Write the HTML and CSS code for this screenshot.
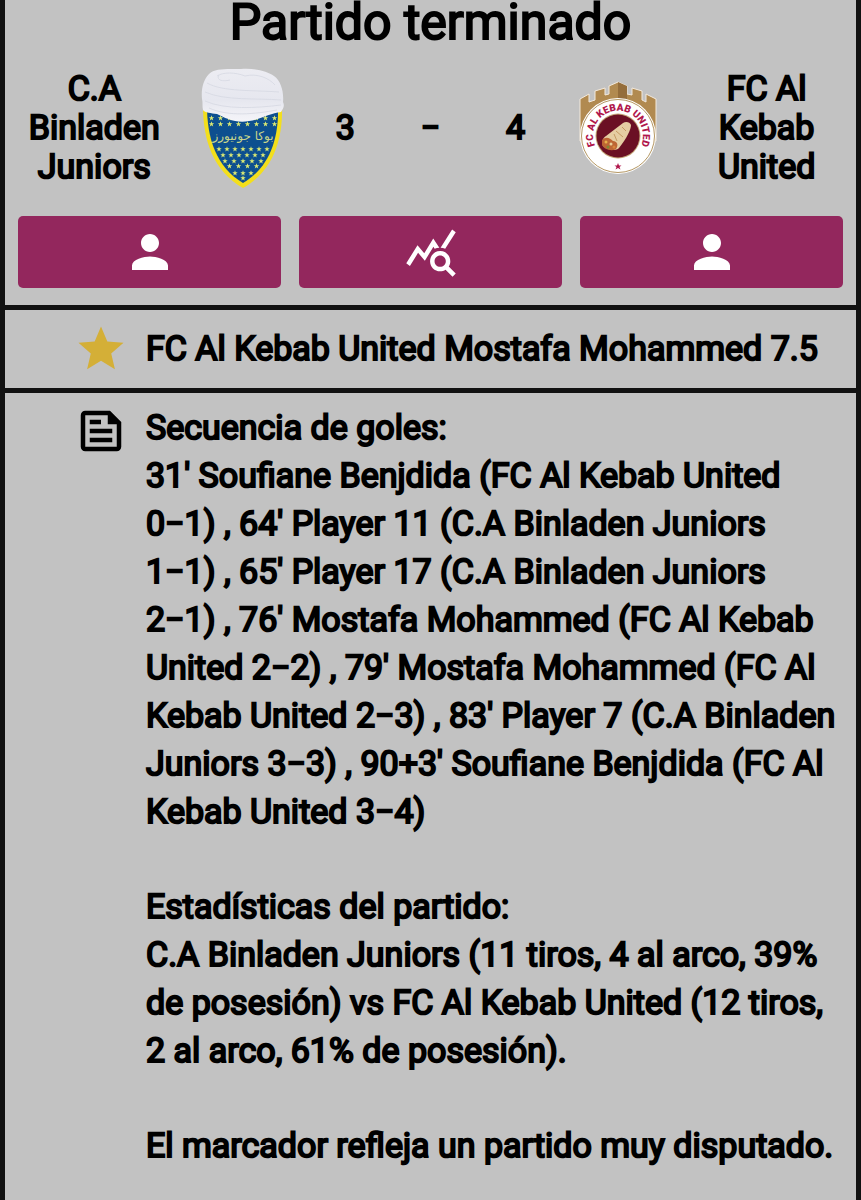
FILE: index.html
```
<!DOCTYPE html>
<html lang="es">
<head>
  <meta charset="UTF-8" />
  <meta name="viewport" content="width=device-width, initial-scale=1.0"/>
  <title>Partido terminado</title>
  <link rel="stylesheet" href="styles.css">
</head>
<body>
  <main class="card">
    <section class="match">
      <h1>Partido terminado</h1>

      <div class="scoreboard">
        <h2 class="team">C.A Binladen Juniors</h2>
        <svg class="crest" width="84" height="120" viewBox="0 0 84 120" role="img" aria-label="Escudo C.A Binladen Juniors">
          <defs>
            <path id="star" d="M0-2.7L.7-.8 2.700-.8 1.100.5 1.700 2.400 0 1.200 -1.700 2.400 -1.100.5 -2.700-.8 -.7-.8Z" fill="#dcea74"/>
            <linearGradient id="cloth" x1="0" y1="0" x2="0" y2="1">
              <stop offset="0" stop-color="#ececf2"/>
              <stop offset=".6" stop-color="#e6e7ef"/>
              <stop offset="1" stop-color="#f5f5f9"/>
            </linearGradient>
          </defs>
          <path d="M2 38H81C82 72 72 103 42 120C12 103 2 72 2 38Z" fill="#f3df1c"/>
          <path d="M6 38H77C78 70 69 99 42 115C15 99 6 70 6 38Z" fill="#0d4f8f"/>
          <g id="stars"></g>
          <text class="crest-text" x="42" y="72" text-anchor="middle">بوكا جونيورز</text>
          <path d="M1 31C0 22 2 12 8 6C14 0 26 1 40 1C54 0 66 3 73 8C80 13 83 24 82 34C84 38 82 41 80 44C70 45 60 51 48 53C36 56 24 50 16 46C10 45 4 45 2 42C1 38 2 35 1 31Z" fill="url(#cloth)"/>
          <g fill="none" stroke="#d6d8e2" stroke-width=".8">
            <path d="M16 8C22 4 34 4 44 8C56 5 68 10 74 17"/>
            <path d="M18 7C15 12 21 14 29 12"/>
            <path d="M6 15C22 24 52 22 78 24"/>
            <path d="M4 24C24 33 56 30 80 32"/>
            <path d="M4 33C24 42 56 40 80 37"/>
            <path d="M8 40C28 49 54 46 76 42"/>
          </g>
        </svg>
        <span class="score">3</span>
        <span class="score">−</span>
        <span class="score">4</span>
        <svg class="crest" width="78" height="94" viewBox="0 0 78 94" role="img" aria-label="Escudo FC Al Kebab United">
          <path d="M1 60V18L10 13V21L16 19V10L26 7V14L30 13V5L39 1L48 5V13L53 14V7L63 10V19L67 21V13L77 18V60Z" fill="#b18a50" stroke="#f4eadc" stroke-width="1"/>
          <path d="M39 1V20H48V5Z" fill="#946d3b"/>
          <circle cx="39" cy="55" r="38" fill="#fff"/>
          <circle cx="39" cy="55" r="36.500" fill="none" stroke="#b59864" stroke-width="1"/>
          <circle cx="39" cy="55" r="22.500" fill="#c5a779"/>
          <circle cx="39" cy="55" r="21.500" fill="#6b1024"/>
          <path id="arc" d="M20 71A25 25 0 1 1 58 71" fill="none"/>
          <text class="ring-text"><textPath href="#arc" startOffset="50%" text-anchor="middle">FC AL KEBAB UNITED</textPath></text>
          <path d="M44 42C47 40 51 41 52 44C52 48 48 57 40 67C36 71 27 68 24 65C22 61 24 57 27 55Z" fill="#e5cda2"/>
          <path d="M43 46L47 50M37 50L44 56M35 53L38 60" stroke="#c49a63" stroke-width="1" fill="none"/>
          <path d="M23 59C27 55 31 57 34 60C38 60 40 64 37 68C32 71 25 68 23 64Z" fill="#bd6534"/>
          <g>
            <circle cx="27" cy="61" r="1.500" fill="#e8b04a"/>
            <circle cx="32" cy="63" r="1.500" fill="#e9cf9a"/>
            <circle cx="29" cy="66" r="1.500" fill="#7d8a35"/>
            <circle cx="35" cy="66" r="1.500" fill="#d8843c"/>
          </g>
          <path d="M39 82L40 84.500 42.500 84.500 40.500 86 41.500 88.500 39 87 36.500 88.500 37.500 86 35.500 84.500 38 84.500Z" fill="#b0164b"/>
        </svg>
        <h2 class="team">FC Al Kebab United</h2>
      </div>

      <div class="actions">
        <button type="button" aria-label="Jugadores C.A Binladen Juniors">
          <svg class="icon" viewBox="0 0 24 24"><path d="M12 12c2.210 0 4-1.790 4-4s-1.790-4-4-4-4 1.790-4 4 1.790 4 4 4zm0 2c-2.670 0-8 1.340-8 4v2h16v-2c0-2.660-5.330-4-8-4z"/></svg>
        </button>
        <button type="button" aria-label="Estadísticas">
          <svg class="icon" viewBox="0 0 24 24"><path d="M19.880 18.470c.44-.7.7-1.510.7-2.390 0-2.490-2.010-4.500-4.500-4.500s-4.500 2.010-4.500 4.500 2.010 4.500 4.490 4.500c.88 0 1.700-.26 2.390-.7L21.580 23 23 21.580l-3.120-3.110zm-3.800.11c-1.380 0-2.500-1.120-2.500-2.500s1.120-2.500 2.500-2.500 2.500 1.120 2.500 2.500-1.120 2.500-2.500 2.500zm-.36-8.500c-.74.02-1.450.18-2.100.45l-.55-.83-3.800 6.180-3.010-3.520-3.630 5.810L1 17l5-8 3 3.500L13 6l2.720 4.080zm2.590.5c-.64-.28-1.330-.45-2.050-.49L21.380 2 23 3.180l-4.690 7.400z"/></svg>
        </button>
        <button type="button" aria-label="Jugadores FC Al Kebab United">
          <svg class="icon" viewBox="0 0 24 24"><path d="M12 12c2.210 0 4-1.790 4-4s-1.790-4-4-4-4 1.790-4 4 1.790 4 4 4zm0 2c-2.670 0-8 1.340-8 4v2h16v-2c0-2.660-5.330-4-8-4z"/></svg>
        </button>
      </div>
    </section>

    <section class="row best">
      <svg class="icon star" viewBox="0 0 24 24"><path d="M12 17.270L18.180 21l-1.640-7.030L22 9.240l-7.190-.61L12 2 9.190 8.630 2 9.240l5.460 4.730L5.820 21z"/></svg>
      <p>FC Al Kebab United Mostafa Mohammed 7.5</p>
    </section>

    <section class="row report">
      <svg class="icon" viewBox="0 0 24 24"><path d="M16 3H5c-1.100 0-2 .9-2 2v14c0 1.100.9 2 2 2h14c1.100 0 2-.9 2-2V8l-5-5zm3 16H5V5h10v4h4v10zM7 17h10v-2H7v2zm5-10H7v2h5V7zm-5 6h10v-2H7v2z"/></svg>
      <div class="report-text">
        <h3>Secuencia de goles:</h3>
        <p>31' Soufiane Benjdida (FC Al Kebab United 0−1) , 64' Player 11 (C.A Binladen Juniors 1−1) , 65' Player 17 (C.A Binladen Juniors 2−1) , 76' Mostafa Mohammed (FC Al Kebab United 2−2) , 79' Mostafa Mohammed (FC Al Kebab United 2−3) , 83' Player 7 (C.A Binladen Juniors 3−3) , 90+3' Soufiane Benjdida (FC Al Kebab United 3−4)</p>
        <h3>Estadísticas del partido:</h3>
        <p>C.A Binladen Juniors (11 tiros, 4 al arco, 39% de posesión) vs FC Al Kebab United (12 tiros, 2 al arco, 61% de posesión).</p>
        <p>El marcador refleja un partido muy disputado.</p>
      </div>
    </section>
  </main>

  <script>
    // rows of stars on the blue crest: [y, count, spacing]
    const rows = [
      [50, 8, 9], [56, 8, 9], [81, 7, 8], [87, 6, 8],
      [93, 5, 9], [98, 4, 9], [105, 3, 8], [110, 1, 0]
    ];
    const stars = document.getElementById("stars");

    rows.forEach(([y, count, gap]) => {
      for (let i = 0; i < count; i++) {
        const use = document.createElementNS("http://www.w3.org/2000/svg", "use");
        use.setAttribute("href", "#star");
        use.setAttribute("x", 42 + (i - (count - 1) / 2) * gap);
        use.setAttribute("y", y);
        stars.appendChild(use);
      }
    });
  </script>
</body>
</html>
```
FILE: styles.css
```
:root {
  --line: #111;
  --panel: #c2c2c2;
  --primary: #93275d;
  --gold: #d4af37;
}

* {
  margin: 0;
  padding: 0;
  box-sizing: border-box;
}

body {
  font-family: Roboto, "Liberation Sans", sans-serif;
  font-size: 34px;
  font-weight: 400;
  line-height: 48px;
  text-rendering: geometricPrecision;
  -webkit-text-stroke: 2px #000;
  background: var(--panel);
  color: #000;
}

h1, h2, h3 {
  font-size: inherit;
  font-weight: inherit;
}

.card {
  min-height: 100vh;
  border-left: 5px solid var(--line);
  border-right: 5px solid var(--line);
}

.match {
  padding-bottom: 17px;
  text-align: center;
}

.match h1 {
  font-size: 50px;
  line-height: 46px;
}

.scoreboard {
  display: grid;
  grid-template-columns: 21fr 14fr 10fr 10fr 10fr 14fr 21fr;
  align-items: center;
  justify-items: center;
  margin-top: 22px;
  line-height: 39px;
}

.team {
  padding: 0 12px;
}

.crest {
  display: block;
}

.crest-text {
  font: 12px "DejaVu Sans", sans-serif;
  fill: #c9d68a;
  -webkit-text-stroke: 0;
}

.ring-text {
  font: 900 10px Roboto, sans-serif;
  fill: #b0164b;
  -webkit-text-stroke: 0;
}

.actions {
  display: grid;
  grid-template-columns: repeat(3, 1fr);
  gap: 18px;
  margin-top: 28px;
  padding: 0 13px;
}

button {
  display: flex;
  align-items: center;
  justify-content: center;
  height: 72px;
  background: var(--primary);
  color: #fff;
  border: none;
  border-radius: 5px;
  cursor: pointer;
}

.icon {
  flex: none;
  width: 54px;
  height: 54px;
  fill: currentColor;
}

.star {
  color: var(--gold);
}

.row {
  display: flex;
  gap: 18px;
  padding: 12px 13px 12px 69px;
  border-top: 5px solid var(--line);
}

.best {
  align-items: center;
}

.report {
  padding-top: 11px;
}

.report-text p + h3,
.report-text p + p {
  margin-top: 47px;
}
```
